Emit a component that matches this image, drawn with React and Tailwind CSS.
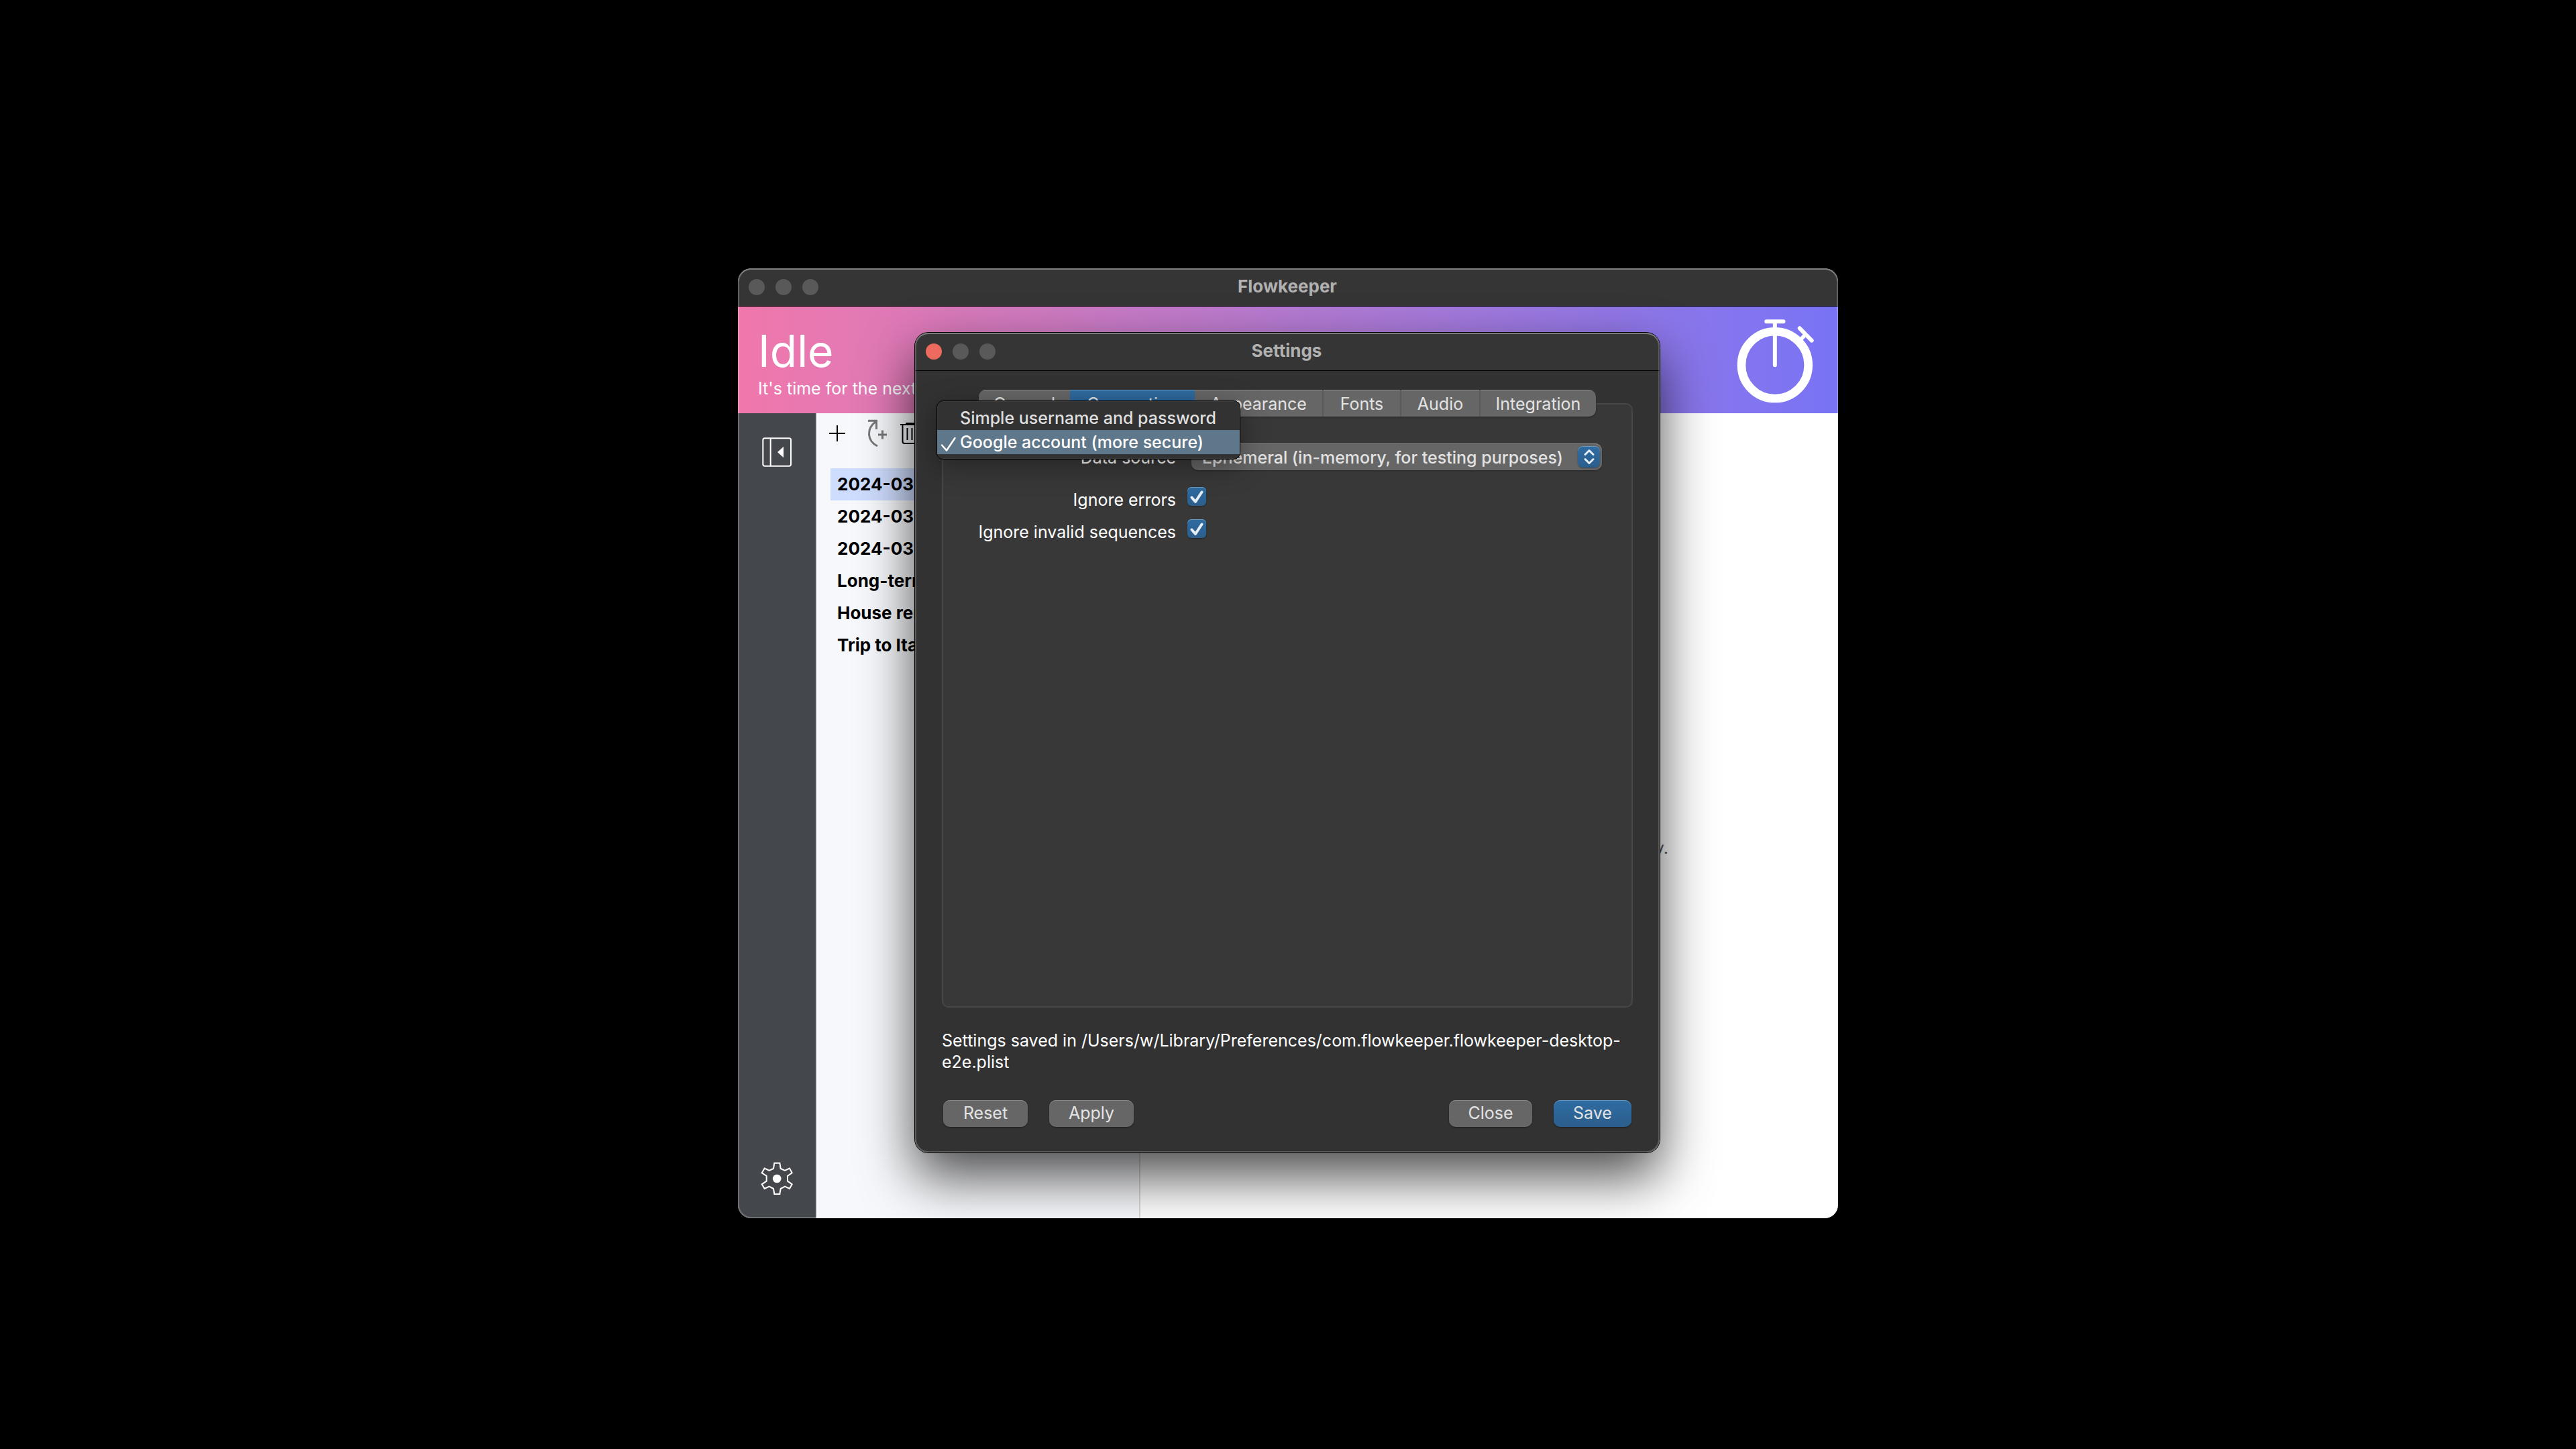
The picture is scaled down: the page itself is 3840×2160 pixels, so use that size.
const TABS = [
  { name: "General", width: "w-[136px]" },
  { name: "Connection", width: "w-[186px]", active: true },
  { name: "Appearance", width: "w-[190px]" },
  { name: "Fonts", width: "w-[116px]" },
  { name: "Audio", width: "w-[118px]" },
  { name: "Integration", width: "w-[174px]" },
];

const BACKLOGS = ["2024-03", "2024-03", "2024-03", "Long-term", "House renovation", "Trip to Italy"];

const BLUE =
  "bg-linear-to-b from-[#2f6ca2] to-[#2b5e8c] shadow-[inset_0_1px_0_#6a97c0,0_1px_2px_rgba(0,0,0,0.4)]";
const GREY = "bg-[#666666] shadow-[inset_0_1px_0_#8a8a8a,0_1px_2px_rgba(0,0,0,0.4)]";

function TitleBar({ title, active }) {
  return (
    <header className="relative flex h-[57px] items-center justify-center border-b border-black bg-[#353535]">
      <div className="absolute left-4 flex gap-4">
        <button aria-label="Close window" className={"size-6 rounded-full " + (active ? "bg-[#ed6a5e]" : "bg-[#595959]")} />
        <button aria-label="Minimize window" className="size-6 rounded-full bg-[#595959]" />
        <button aria-label="Zoom window" className="size-6 rounded-full bg-[#595959]" />
      </div>
      <h1 className="pr-0.5 pb-0.5 text-[26px] leading-8 font-bold text-[#b1b1b1]">{title}</h1>
    </header>
  );
}

function StopwatchIcon() {
  return (
    <svg viewBox="568 257 344 376" className="h-[125px] w-[115px]" fill="none" stroke="white" strokeLinecap="round" aria-hidden="true">
      <circle cx="738" cy="462" r="150" strokeWidth="38" />
      <path d="M738 268V462M700 267H776M849 297L903 352" strokeWidth="18" />
      <path d="M855 346L876 325" strokeWidth="17" strokeLinecap="butt" />
    </svg>
  );
}

function PanelIcon() {
  return (
    <svg viewBox="168 96 132 132" className="size-11" fill="none" stroke="white" strokeWidth="6" aria-hidden="true">
      <rect x="172" y="100" width="125" height="124" rx="8" />
      <path d="M206 100V224" />
      <path d="M237 162L264 137V187Z" fill="white" stroke="none" />
    </svg>
  );
}

function GearIcon() {
  return (
    <svg viewBox="161 153 144 150" className="h-[50px] w-12" fill="none" stroke="white" strokeWidth="6" aria-hidden="true">
      <path d="M222 158H246L250 183L269 192L290 182L301 202L281 216V239L301 253L290 273L269 263L250 273L246 297H222L218 273L199 263L178 273L166 253L187 239V216L166 202L178 182L199 192L218 183Z" />
      <circle cx="233.500" cy="228" r="19" fill="white" stroke="none" />
    </svg>
  );
}

function BacklogToolbar() {
  return (
    <div className="flex h-[82px] items-start pt-2 pl-4">
      <button aria-label="New backlog" className="mt-2 p-0.5">
        <svg viewBox="0 0 24 24" className="size-6" stroke="black" strokeWidth="2">
          <path d="M12 0V24M0 12H24" />
        </svg>
      </button>
      <button aria-label="Add from incomplete" className="ml-8">
        <svg viewBox="1294 624 30 44" className="h-11 w-[30px]" fill="none" stroke="#777777" strokeWidth="3" overflow="visible">
          <path d="M1308 665C1292 657 1291 638 1307 627.500M1294 627.200H1306.500V640M1309 648H1322M1315.500 641.500V654.500" />
        </svg>
      </button>
      <button aria-label="Delete backlog" className="ml-[18px] pt-1">
        <svg viewBox="1342 628 30 36" className="h-9 w-[30px]" fill="none" stroke="black" strokeWidth="2">
          <path d="M1342 633H1372M1350 631H1364M1345.500 633V658Q1345.500 661 1348.500 661H1365.500Q1368.500 661 1368.500 658V633M1352.500 638V656M1359.500 638V656" />
        </svg>
      </button>
    </div>
  );
}

function MainWindow() {
  return (
    <div className="relative flex min-h-[1416px] w-full flex-col overflow-hidden rounded-[20px] bg-white">
      <TitleBar title="Flowkeeper" />
      <div className="flex h-[159px] items-start justify-between bg-linear-to-r from-[#f077ab] to-[#7873f5] pr-9 pl-[30px] text-white">
        <div className="pt-[26px]">
          <p className="text-[66px] leading-[80px]">Idle</p>
          <p className="text-[25px] leading-8">It's time for the next Pomodoro.</p>
        </div>
        <div className="pt-[19px]">
          <StopwatchIcon />
        </div>
      </div>
      <div className="flex flex-1">
        <aside className="flex w-[118px] flex-col items-center justify-between border-r-2 border-[#d4d5d8] bg-[#44474c] pt-9 pb-[34px]">
          <button aria-label="Toggle backlogs"><PanelIcon /></button>
          <button aria-label="Settings"><GearIcon /></button>
        </aside>
        <section className="w-[482px] border-r-2 border-[#d9d9d9] bg-[#f7f8fb]">
          <BacklogToolbar />
          <ul className="px-5 text-[26px] font-bold text-black">
            {BACKLOGS.map((name, i) => (
              <li key={i} className={"h-12 px-2.5 leading-[48px] " + (i === 0 ? "bg-[#cedcfd]" : "")}>{name}</li>
            ))}
          </ul>
        </section>
        <section className="flex flex-1 items-center justify-end pr-[253px] pb-[98px]">
          <p className="pt-[194px] text-[25px] leading-8 text-[#555555]">for today.</p>
        </section>
      </div>
      <div className="pointer-events-none absolute inset-0 rounded-[20px] shadow-[inset_0_0_0_2px_rgba(255,255,255,0.22),inset_0_2px_0_rgba(255,255,255,0.2)]" />
    </div>
  );
}

function CheckRow({ id, label }) {
  return (
    <>
      <label htmlFor={id} className="pt-2.5 text-right leading-8">{label}</label>
      <div className="relative ml-[17px] size-7">
        <input id={id} type="checkbox" defaultChecked className={"block size-7 appearance-none rounded-md " + BLUE} />
        <svg viewBox="0 0 28 28" className="pointer-events-none absolute inset-0 size-7" fill="none" stroke="#e6edf4" strokeWidth="4" strokeLinecap="round" strokeLinejoin="round" aria-hidden="true">
          <path d="M6.500 15.500L12 22L21.500 7.500" />
        </svg>
      </div>
    </>
  );
}

function AuthMenu() {
  return (
    <ul role="listbox" aria-label="Authentication" className="absolute top-[101px] left-8 w-[453px] rounded-[10px] border border-black bg-[#323232] py-[7px] text-[25px] leading-9 font-medium shadow-[inset_0_0_0_1px_rgba(255,255,255,0.04),0_10px_40px_rgba(0,0,0,0.35)]">
      <li role="option" aria-selected="false" className="pl-[34px] text-[#dfdfdf]">Simple username and password</li>
      <li role="option" aria-selected="true" className="flex items-center bg-[#5f778a] text-white">
        <svg viewBox="0 0 34 36" className="h-9 w-[34px]" fill="none" stroke="white" strokeWidth="2.500" strokeLinecap="round" strokeLinejoin="round" aria-hidden="true">
          <path d="M7 22.500L14 30.500L26.500 12" />
        </svg>
        Google account (more secure)
      </li>
    </ul>
  );
}

function PushButton({ children, primary, width }) {
  return (
    <button className={"h-10 rounded-[10px] pb-0.5 text-[25px] leading-8 text-[#e3e3e3] " + width + " " + (primary ? BLUE : GREY)}>
      {children}
    </button>
  );
}

function SettingsDialog() {
  return (
    <div role="dialog" aria-label="Settings" className="absolute top-24 left-[264px] w-[1110px] rounded-[20px] shadow-[0_0_0_1px_#000,0_36px_80px_rgba(0,0,0,0.7)]">
      <div className="overflow-hidden rounded-[20px] bg-[#323232] text-[25px] text-white">
        <TitleBar title="Settings" active />
        <div className="px-10 pt-7 pb-[38px]">
          <nav role="tablist" className="relative mx-auto flex h-10 w-[920px] overflow-hidden rounded-[10px] bg-[#666666] shadow-[0_1px_2px_rgba(0,0,0,0.4)]">
            {TABS.map((tab, i) => (
              <button
                key={tab.name}
                role="tab"
                aria-selected={!!tab.active}
                className={
                  tab.width + " h-10 pt-px leading-8 text-[#e3e3e3] " +
                  (tab.active
                    ? "bg-linear-to-b from-[#2f6ca2] to-[#2b5e8c] shadow-[inset_0_1px_0_#6a97c0]"
                    : "shadow-[inset_0_1px_0_#8a8a8a]") +
                  (i > 2 ? " border-l-2 border-[#5a5a5a]" : "")
                }
              >
                {tab.name}
              </button>
            ))}
          </nav>
          <div className="-mt-5 min-h-[901px] rounded-[10px] border-2 border-[#474747] bg-[#383838] pt-[58px]">
            <div className="grid grid-cols-[347px_1fr] items-center">
              <label htmlFor="source" className="pt-0.5 text-right leading-8">Data source</label>
              <div className="relative mr-11 ml-[23px]">
                <select id="source" className={"block h-10 w-full appearance-none rounded-[10px] pt-0.5 pl-4 text-[25px] leading-8 font-medium text-[#e3e3e3] " + GREY}>
                  <option>Ephemeral (in-memory, for testing purposes)</option>
                </select>
                <span className={"pointer-events-none absolute top-1 right-[3px] flex h-8 w-[33px] items-center justify-center rounded-[8px] " + BLUE}>
                  <svg viewBox="0 0 16 24" className="h-6 w-4" fill="none" stroke="#e6edf4" strokeWidth="3" strokeLinecap="round" strokeLinejoin="round" aria-hidden="true">
                    <path d="M2 8.500L8 2.500L14 8.500M2 15.500L8 21.500L14 15.500" />
                  </svg>
                </span>
              </div>
            </div>
            <div className="mt-[15px] grid auto-rows-[48px] grid-cols-[347px_1fr] items-center">
              <CheckRow id="errors" label="Ignore errors" />
              <CheckRow id="sequences" label="Ignore invalid sequences" />
            </div>
          </div>
          <p className="mt-[33px] leading-8">
            Settings saved in /Users/w/Library/Preferences/com.flowkeeper.flowkeeper-desktop-e2e.plist
          </p>
          <div className="mt-[41px] flex justify-between px-0.5">
            <div className="flex gap-8">
              <PushButton width="w-[126px]">Reset</PushButton>
              <PushButton width="w-[126px]">Apply</PushButton>
            </div>
            <div className="flex gap-8">
              <PushButton width="w-[124px]">Close</PushButton>
              <PushButton width="w-[116px]" primary>Save</PushButton>
            </div>
          </div>
        </div>
      </div>
      <div className="pointer-events-none absolute inset-0 rounded-[20px] shadow-[inset_0_0_0_2px_rgba(255,255,255,0.2),inset_0_2px_0_rgba(255,255,255,0.2)]" />
      <AuthMenu />
    </div>
  );
}

export default function App() {
  return (
    <div className="flex min-h-screen justify-center bg-black pt-[400px] font-['Inter',sans-serif]">
      <main className="relative h-fit w-full max-w-[1640px]">
        <MainWindow />
        <SettingsDialog />
      </main>
    </div>
  );
}
